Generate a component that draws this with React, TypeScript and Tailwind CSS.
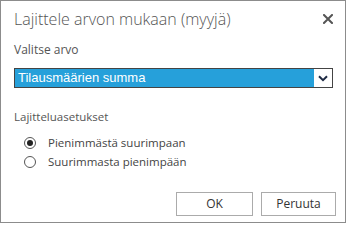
import React from "react";

export default function App() {
  const ui = { fontFamily: '"Open Sans", "Noto Sans", sans-serif' };
  return (
    <div className="w-[347px] h-[226px] bg-white">
      <div
        className="w-[346px] h-[223px] border border-[#8c8c8c] bg-white flex flex-col pl-[13px] pr-[9px]"
        style={ui}
      >
        <div className="flex items-start justify-between pt-[8px]">
          <div className="text-[16px] leading-[21px] font-light text-[#555555]">
            Lajittele arvon mukaan (myyjä)
          </div>
          <svg width="10" height="10" viewBox="0 0 10 10" className="mt-[5px] mr-[3px]">
            <path d="M1 1 L9 9 M9 1 L1 9" stroke="#555" strokeWidth="2" strokeLinecap="square" />
          </svg>
        </div>
        <div className="mt-[12px] text-[12px] leading-[16px] text-[#555555]">Valitse arvo</div>
        <div className="mt-[10px] mr-[3px] h-[20px] border border-[#444] flex">
          <div
            className="flex-1 bg-[#26a0da] text-white text-[13px] leading-[18px] pl-[3px]"
            style={{ fontFamily: '"Liberation Sans", Arial, sans-serif' }}
          >
            Tilausmäärien summa
          </div>
          <div className="w-[18px] bg-white flex items-center justify-center">
            <svg width="10" height="7" viewBox="0 0 10 7">
              <path d="M1 1.2 L5 5.2 L9 1.2" stroke="#1e2a44" strokeWidth="2" fill="none" />
            </svg>
          </div>
        </div>
        <div className="mt-[21px] text-[11.5px] leading-[16px] text-[#555555]">Lajitteluasetukset</div>
        <div className="mt-[10px] flex flex-col gap-[3px] pl-[10px]">
          <div className="flex items-center gap-[12px] h-[16px]">
            <div className="w-[12px] h-[12px] rounded-full border border-[#555] flex items-center justify-center">
              <div className="w-[6px] h-[6px] rounded-full bg-[#222]" />
            </div>
            <span className="text-[11.5px] leading-[16px] text-[#444]">Pienimmästä suurimpaan</span>
          </div>
          <div className="flex items-center gap-[12px] h-[16px]">
            <div className="w-[12px] h-[12px] rounded-full border border-[#555]" />
            <span className="text-[11.5px] leading-[16px] text-[#444]">Suurimmasta pienimpään</span>
          </div>
        </div>
        <div className="mt-auto mb-[6px] flex justify-end gap-[8px]">
          <button className="w-[77px] h-[24px] border border-[#ababab] bg-white text-[12px] text-[#333]">
            OK
          </button>
          <button className="w-[75px] h-[24px] border border-[#ababab] bg-white text-[12px] text-[#333]">
            Peruuta
          </button>
        </div>
      </div>
    </div>
  );
}
